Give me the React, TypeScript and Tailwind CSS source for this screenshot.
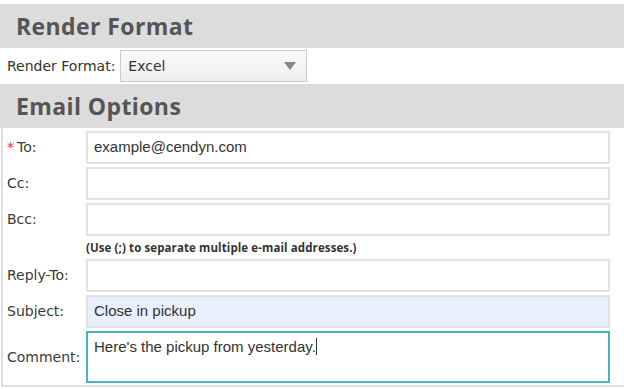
import React from 'react';

const heading = "font-['Open_Sans',sans-serif]";
const label = "font-['DejaVu_Sans',Verdana,sans-serif]";
const body = "font-['Liberation_Sans',Arial,sans-serif]";

const SectionHeader = ({ title }: { title: string }) => (
  <h2
    className={`h-[44px] bg-[#dcdcdc] pl-[16px] flex items-center text-[23px] font-bold tracking-[0.4px] text-[#555] ${heading}`}
  >
    {title}
  </h2>
);

const Field = ({
  name,
  value = '',
  required = false,
  className = '',
}: {
  name: string;
  value?: string;
  required?: boolean;
  className?: string;
}) => (
  <div className="flex items-center">
    <label className={`w-[79px] shrink-0 text-[14px] text-[#3a3a3a] ${label}`}>
      {required && <span className="text-[#e33] mr-[3px]">*</span>}
      {name}
    </label>
    <div
      className={`w-[524px] h-[33px] border-2 border-[#e2e2e2] flex items-center px-[6px] text-[15px] text-[#333] ${body} ${className}`}
    >
      {value}
    </div>
  </div>
);

const App = () => {
  return (
    <div className="w-[624px] h-[389px] bg-white overflow-hidden pt-[4px]">
      <SectionHeader title="Render Format" />

      <div className="h-[36px] flex items-center pl-[7px]">
        <span className={`text-[14px] text-[#333] ${label}`}>Render Format:</span>
        <div className="ml-[5px] w-[187px] h-[32px] border border-[#ccc] bg-gradient-to-b from-[#fafafa] to-[#eeeeee] flex items-center justify-between pl-[7px] pr-[10px]">
          <span className={`text-[14px] text-[#333] ${label}`}>Excel</span>
          <svg width="12" height="8" viewBox="0 0 12 8">
            <path d="M0 0 L12 0 L6 8 Z" fill="#888" />
          </svg>
        </div>
      </div>

      <SectionHeader title="Email Options" />

      <div className="ml-[1px] border-l-2 border-b-2 border-[#e0e0e0] pt-[3px] pb-[2px] pl-[4px] flex flex-col gap-[3px]">
        <Field name="To:" required value="example@cendyn.com" />
        <Field name="Cc:" />
        <Field name="Bcc:" />
        <div
          className={`h-[17px] pl-[79px] flex items-center text-[11.5px] font-bold tracking-[0.1px] text-[#333] ${heading}`}
        >
          (Use (;) to separate multiple e-mail addresses.)
        </div>
        <Field name="Reply-To:" />
        <Field name="Subject:" value="Close in pickup" className="bg-[#e8f0fe]" />
        <div className="flex items-center">
          <label className={`w-[79px] shrink-0 text-[14px] text-[#3a3a3a] ${label}`}>Comment:</label>
          <div
            className={`w-[524px] h-[52px] border-2 border-[#4bb4c4] px-[6px] pt-[3px] text-[15px] text-[#333] ${body}`}
          >
            Here's the pickup from yesterday.
            <span className="inline-block w-[1px] h-[17px] bg-[#333] align-text-bottom" />
          </div>
        </div>
      </div>
    </div>
  );
};

export default App;
